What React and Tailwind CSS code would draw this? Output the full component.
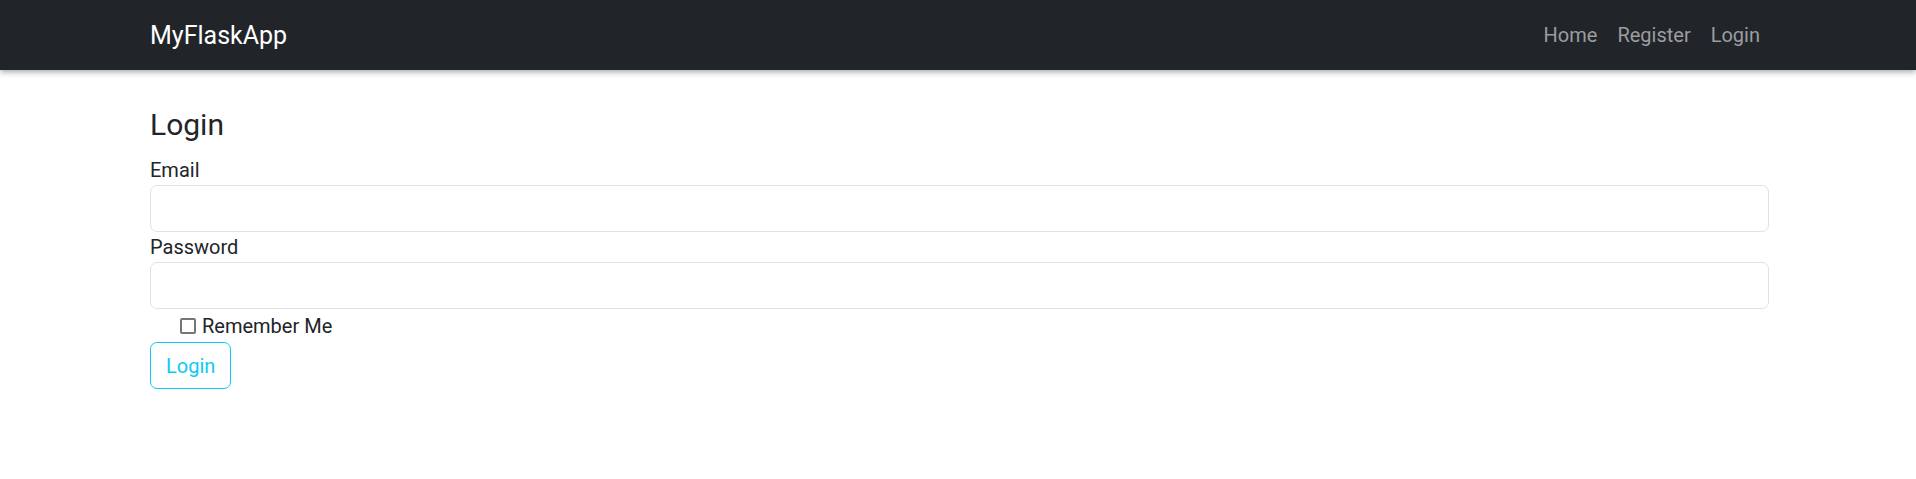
import React from 'react';

const font = { fontFamily: 'Roboto, "Liberation Sans", sans-serif' };

const Navbar = () => (
  <nav className="h-[70px] bg-[#212529] shadow-[0_2px_6px_rgba(0,0,0,0.35)] relative z-10">
    <div className="ml-[150px] mr-[146px] h-full flex items-center justify-between">
      <a href="#" className="text-[25px] text-white leading-none">MyFlaskApp</a>
      <ul className="flex items-center text-[20px] text-[#9b9d9f]">
        <li><a href="#" className="px-[10px]">Home</a></li>
        <li><a href="#" className="px-[10px]">Register</a></li>
        <li><a href="#" className="px-[10px]">Login</a></li>
      </ul>
    </div>
  </nav>
);

export default function App() {
  return (
    <div className="min-h-screen bg-white text-[#212529]" style={font}>
      <Navbar />

      <main className="ml-[150px] mr-[147px] pt-[37px]">
        <h4 className="text-[30px] leading-[36px] mb-[12px]">Login</h4>

        <form onSubmit={(e) => e.preventDefault()}>
          {/* Email */}
          <label className="block text-[20px] leading-[30px]">Email</label>
          <input
            type="email"
            className="block w-full h-[47px] rounded-[7px] border border-[#dee2e6] px-[15px] text-[20px] outline-none"
          />

          {/* Password */}
          <label className="block text-[20px] leading-[30px]">Password</label>
          <input
            type="password"
            className="block w-full h-[47px] rounded-[7px] border border-[#dee2e6] px-[15px] text-[20px] outline-none"
          />

          {/* Remember me */}
          <div className="h-[33px] pl-[30px] flex items-center">
            <span className="w-[16px] h-[16px] border-2 border-[#767676] rounded-[2px] bg-white" />
            <span className="ml-[6px] text-[20px] leading-[30px]">Remember Me</span>
          </div>

          <button
            type="submit"
            className="h-[47px] px-[15px] rounded-[7px] border border-[#0dcaf0] text-[#0dcaf0] text-[20px] bg-white"
          >
            Login
          </button>
        </form>
      </main>
    </div>
  );
}
